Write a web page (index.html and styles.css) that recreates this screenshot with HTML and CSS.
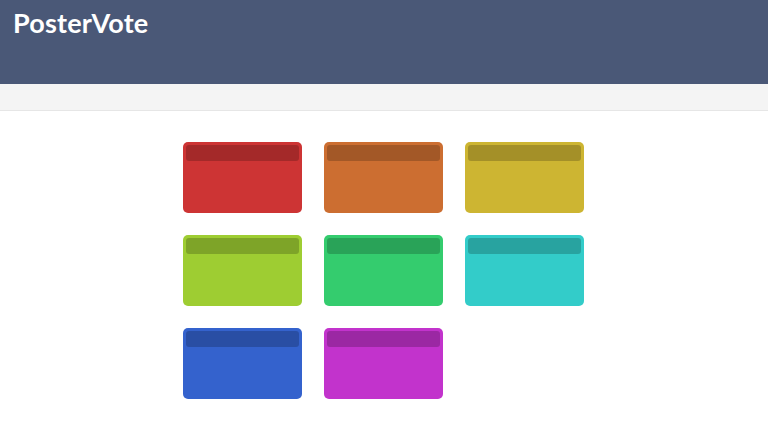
FILE: index.html
```html
<!DOCTYPE html>
<html>
<head>
<meta charset="utf-8">
<link rel="stylesheet" href="styles.css">
</head>
<body>
<header class="topbar">
  <h1 class="brand">PosterVote</h1>
</header>
<div class="subbar"></div>
<main class="content">
  <div class="grid">
    <div class="card red"><div class="card-bar"></div></div>
    <div class="card orange"><div class="card-bar"></div></div>
    <div class="card yellow"><div class="card-bar"></div></div>
    <div class="card lime"><div class="card-bar"></div></div>
    <div class="card green"><div class="card-bar"></div></div>
    <div class="card cyan"><div class="card-bar"></div></div>
    <div class="card blue"><div class="card-bar"></div></div>
    <div class="card magenta"><div class="card-bar"></div></div>
  </div>
</main>
</body>
</html>
```
FILE: styles.css
```css
* { box-sizing: border-box; }
html, body { margin: 0; padding: 0; background: #ffffff; font-family: Lato, "Liberation Sans", sans-serif; }
.topbar {
  height: 84px;
  background: #4a5877;
  padding: 7px 13px 0;
}
.brand {
  margin: 0;
  font-size: 27px;
  font-weight: 700;
  color: #ffffff;
  line-height: 31px;
  letter-spacing: 0.2px;
}
.subbar {
  height: 27px;
  background: #f4f4f4;
  border-bottom: 1px solid #e6e6e6;
}
.content {
  display: flex;
  justify-content: center;
  padding: 31px 1px 0 0;
}
.grid {
  display: grid;
  grid-template-columns: repeat(3, 119px);
  grid-auto-rows: 71px;
  gap: 22px;
}
.card {
  border-radius: 5px;
  padding: 3px;
}
.card-bar {
  height: 16px;
  border-radius: 3px;
  background: rgba(0, 0, 0, 0.2);
}
.red { background: #cd3434; }
.orange { background: #cc6e31; }
.yellow { background: #cdb532; }
.lime { background: #9ecd32; }
.green { background: #34cc6e; }
.cyan { background: #33ccc9; }
.blue { background: #3462cd; }
.magenta { background: #c233cc; }
```
